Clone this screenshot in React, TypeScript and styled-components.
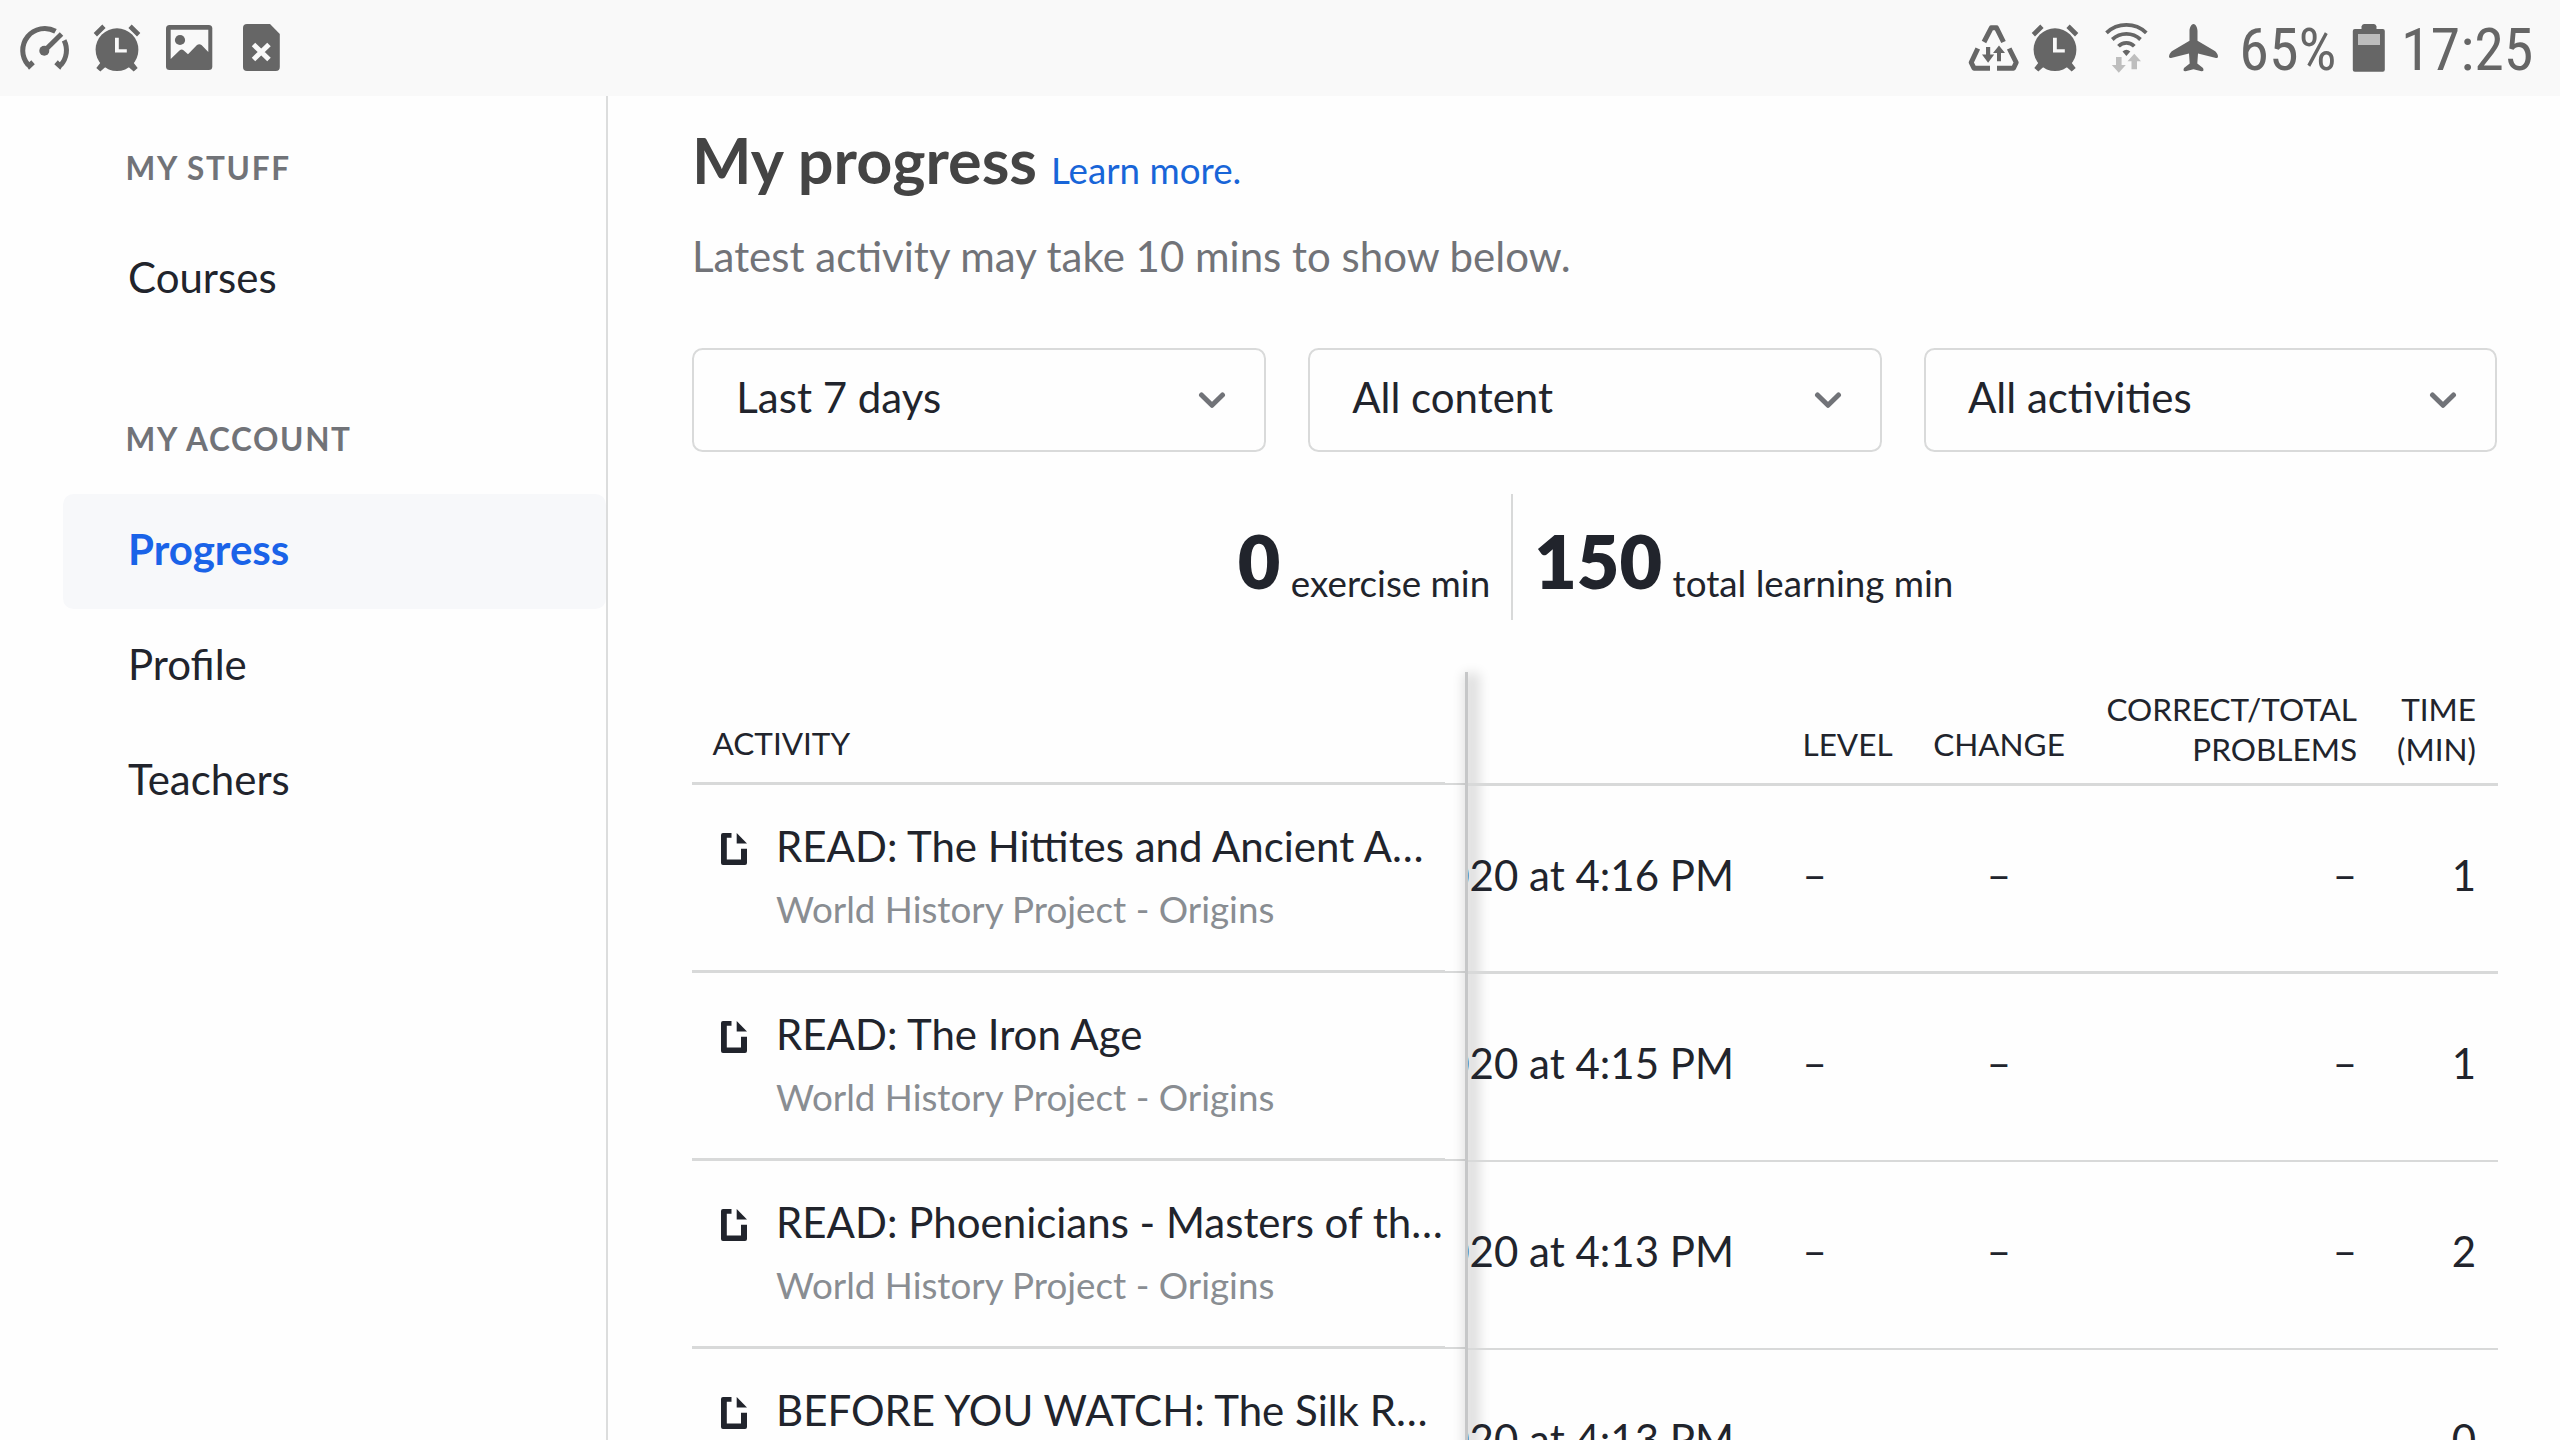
import React from "react";
import styled, { createGlobalStyle } from "styled-components";

const ink = "#21242c";
const line = "#d8d9d9";

const GlobalStyle = createGlobalStyle`
  * { box-sizing: border-box; }
  html, body { margin: 0; padding: 0; background: #fefefe; overflow: hidden; }
`;

const Screen = styled.div`
  width: 2560px;
  height: 1440px;
  display: flex;
  flex-direction: column;
  overflow: hidden;
  background: #fefefe;
  color: ${ink};
  font-family: Lato, "Liberation Sans", sans-serif;
  font-size: 42px;
`;

const StatusBar = styled.header`
  flex: none;
  height: 96px;
  display: flex;
  background: #f9f9f9;
  color: #666;
`;

const StatusGroup = styled.div<{ $end?: boolean }>`
  display: flex;
  margin-left: ${(p) => (p.$end ? "auto" : "0")};
`;

const StatusIcon = styled.svg<{ $before: number }>`
  flex: none;
  display: block;
  height: 96px;
  margin-left: ${(p) => p.$before}px;
`;

const StatusText = styled.div<{ $width: number; $before: number }>`
  flex: none;
  width: ${(p) => p.$width}px;
  margin-left: ${(p) => p.$before}px;
  padding-top: 15px;
  font-family: "Roboto Condensed", Roboto, "Liberation Sans", sans-serif;
  font-stretch: 75%;
  font-size: 60px;
  line-height: 70px;
  white-space: nowrap;
`;

const Body = styled.div`
  flex: 1;
  min-height: 0;
  display: flex;
`;

const Sidebar = styled.nav`
  flex: none;
  width: 608px;
  padding-left: 63px;
  border-right: 2px solid #dcdddd;
`;

const SideHeading = styled.h2<{ $height: number; $bottom: number }>`
  margin: 0;
  height: ${(p) => p.$height}px;
  display: flex;
  align-items: flex-end;
  padding: 0 0 ${(p) => p.$bottom}px 62.5px;
  font-size: 31.5px;
  line-height: 38px;
  font-weight: 700;
  letter-spacing: 1.68px;
  color: #717378;
`;

const SideItem = styled.a<{ $active?: boolean }>`
  height: 115px;
  display: flex;
  align-items: center;
  padding: 0 0 5px 65px;
  border-radius: 10.5px;
  background: ${(p) => (p.$active ? "#f7f8fa" : "transparent")};
  color: ${(p) => (p.$active ? "#1a63e8" : ink)};
  font-weight: ${(p) => (p.$active ? 700 : 400)};
`;

const Main = styled.main`
  flex: none;
  width: 1889.5px;
  padding: 25px 0 0 84px;
  display: flex;
  flex-direction: column;
`;

const TitleRow = styled.div`
  display: flex;
  align-items: baseline;
  gap: 14px;
`;

const Title = styled.h1`
  margin: 0;
  font-size: 63px;
  line-height: 77px;
  font-weight: 700;
  color: #444;
`;

const Learn = styled.a`
  font-size: 36.75px;
  color: #1865d8;
`;

const Note = styled.p`
  margin: 32px 0 0;
  line-height: 52px;
  color: #717378;
`;

const Filters = styled.div`
  margin-top: 66px;
  display: grid;
  grid-template-columns: repeat(3, 1fr);
  gap: 42px;
`;

const Select = styled.div`
  height: 104px;
  display: flex;
  align-items: center;
  justify-content: space-between;
  padding: 0 38px 0 42.3px;
  border: 2px solid #d9dada;
  border-radius: 10.5px;
  background: #fefefe;
`;

const SelectLabel = styled.span`
  padding-bottom: 6px;
`;

const Stats = styled.div`
  margin-top: 42px;
  height: 126px;
  display: flex;
  justify-content: center;
  padding-left: 1.5px;
`;

const Stat = styled.div<{ $first?: boolean }>`
  display: flex;
  align-items: flex-end;
  gap: 10.5px;
  padding: ${(p) => (p.$first ? "0 21px 14px 0" : "0 0 14px 21px")};
  border-right: ${(p) => (p.$first ? "2px solid #d8d9d9" : "0")};
`;

const StatNumber = styled.span`
  font-size: 73.5px;
  line-height: 90px;
  font-weight: 800;
`;

const StatUnit = styled.span`
  font-size: 36.75px;
  line-height: 45px;
`;

const Table = styled.div`
  margin: 52px -0.5px 0 0;
  height: 768px;
  display: flex;
`;

const Pinned = styled.div`
  flex: none;
  width: 773px;
`;

const Rail = styled.div`
  flex: none;
  width: 3px;
  height: 800px;
  background: #c6c7c8;
  box-shadow: 5px 8px 12px 7px rgba(0, 0, 0, 0.12);
`;

const Scroller = styled.div`
  flex: 1;
  min-width: 0;
  z-index: 1;
`;

const PinnedRow = styled.div<{ $height: number }>`
  height: ${(p) => p.$height}px;
  display: flex;
`;

const PinnedCell = styled.div`
  width: 753px;
  display: flex;
  border-bottom: 3px solid ${line};
`;

const PinnedEdge = styled.div`
  width: 20px;
  border-bottom: 2px solid ${line};
`;

const PinnedHead = styled.div`
  align-self: flex-end;
  padding: 0 0 19px 20.5px;
  font-size: 31.5px;
  line-height: 40px;
`;

const DocIcon = styled.svg`
  flex: none;
  width: 26px;
  height: 32px;
  margin: 48px 0 0 29px;
`;

const Activity = styled.div`
  padding: 35px 0 0 29px;
  white-space: nowrap;
`;

const ActivityTitle = styled.div`
  line-height: 52px;
`;

const ActivityCourse = styled.div`
  margin-top: 15px;
  font-size: 36.75px;
  line-height: 45px;
  color: #898d92;
`;

const DataRow = styled.div<{ $head?: boolean; $height: number; $rule: number }>`
  height: ${(p) => p.$height}px;
  display: grid;
  grid-template-columns: 334.5px 130.5px 132px 292px 119px;
  align-items: ${(p) => (p.$head ? "end" : "center")};
  padding-bottom: ${(p) => (p.$head ? 0 : 10 - p.$rule)}px;
  border-bottom: ${(p) => p.$rule}px solid ${line};
  font-size: ${(p) => (p.$head ? 31.5 : 42)}px;
  line-height: ${(p) => (p.$head ? "40px" : "52px")};
`;

const DateCell = styled.div`
  width: 266px;
  display: flex;
  justify-content: flex-end;
  overflow: hidden;
  white-space: nowrap;
`;

const Cell = styled.div<{ $align?: string; $bottom?: number }>`
  text-align: ${(p) => p.$align ?? "left"};
  padding-bottom: ${(p) => p.$bottom ?? 0}px;
`;

const Gauge = () => (
  <StatusIcon $before={19} width="52" viewBox="19 0 52 96" fill="none">
    <path d="M28.2 65A22 22 0 0 1 55.5 31.3" stroke="currentColor" strokeWidth="5" />
    <path d="M64.1 40.4A22 22 0 0 1 60.8 65" stroke="currentColor" strokeWidth="5" />
    <path d="M25.5 64.5L29 69.8 34.8 64.3 31.3 60.3 29.5 62zM63.5 64.5L60.3 69.8 54.3 64.3 57.8 60.3 59.5 62z" fill="currentColor" />
    <path d="M44.5 50.7L61.5 34" stroke="currentColor" strokeWidth="5" />
    <circle cx="44.3" cy="50.7" r="5" fill="currentColor" />
  </StatusIcon>
);

const Alarm = ({ before }: { before: number }) => (
  <StatusIcon $before={before} width="48" viewBox="93 0 48 96" fill="currentColor">
    <circle cx="117" cy="49.7" r="21.4" />
    <path d="M93.7 33L102.3 24.6 105.6 28 97 36.4zM140.3 33L131.7 24.6 128.4 28 137 36.4z" />
    <path d="M96.3 68L101 62 106 66.5 100.3 71.5zM137.7 68L133 62 128 66.5 133.7 71.5z" />
    <path d="M115 37.7h3.8v11.6h8v3.2H115z" fill="#f9f9f9" />
  </StatusIcon>
);

const Picture = () => (
  <StatusIcon $before={25} width="47" viewBox="166 0 47 96" fill="currentColor">
    <rect x="166" y="25" width="46.3" height="45" rx="3.5" />
    <path
      d="M170.7 29.7H208.3V52L201.5 45Q199.3 43.3 197 45L188 54.3 183.5 50.3Q181.7 48.8 179.5 50.5L170.7 59z"
      fill="#f9f9f9"
    />
    <circle cx="180" cy="40" r="5.1" />
  </StatusIcon>
);

const FileX = () => (
  <StatusIcon $before={30} width="37" viewBox="243 0 37 96" fill="currentColor">
    <path d="M247 24H270L279.8 34V67A4 4 0 0 1 275.8 71H247A4 4 0 0 1 243 67V28A4 4 0 0 1 247 24z" />
    <path d="M253.5 44.5L269 59.5M269 44.5L253.5 59.5" stroke="#f9f9f9" strokeWidth="5" />
  </StatusIcon>
);

const DataSaver = () => (
  <StatusIcon $before={0} width="53" viewBox="1967 0 53 96">
    <g fill="none" stroke="currentColor" strokeWidth="5" strokeLinejoin="round">
      <path d="M1984 42L1991.3 27.8H1996.5L2003.5 42" />
      <path d="M1977.8 48.5L1971.2 62.5 1974 68.2H1990" />
      <path d="M2009.2 48.5L2016.2 62.5 2013.5 68.2H1997" />
    </g>
    <path
      d="M1986 47h4.2v7.5h4L1988.1 62.7 1982 54.5h4zM1999 45.5L2005 53h-4v8.3h-4V53h-4z"
      fill="currentColor"
    />
  </StatusIcon>
);

const Wifi = () => (
  <StatusIcon $before={26.5} width="43" viewBox="2105 0 43 96">
    <g fill="none" stroke="currentColor" strokeWidth="3.8">
      <path d="M2106.5 32.8A29 29 0 0 1 2146.3 32.8" />
      <path d="M2112.3 39.5A20.5 20.5 0 0 1 2140.5 39.5" />
      <path d="M2118.5 46.3A11 11 0 0 1 2134.3 46.3" />
    </g>
    <path d="M2122.5 51.6Q2126.4 48 2130.3 51.6L2126.4 56z" fill="currentColor" />
    <path
      d="M2116 57h5.6v8h4.2L2118.8 72.7 2111.8 65h4.2zM2134.3 53.7L2141 61.3h-4V69.3h-5.5V61.3h-4z"
      fill="#bebebe"
    />
  </StatusIcon>
);

const Plane = () => (
  <StatusIcon $before={20} width="51" viewBox="2168 0 51 96" fill="currentColor">
    <path d="M2193.5 24C2196 24 2197.5 28 2197.5 31V40.7L2214 50.5Q2218 53 2218 57 2217.5 58.5 2215 57.7L2198 53.5 2197.3 63.5 2203 68Q2204.5 71.5 2201.5 71.3L2193.5 69.3 2185.5 71.3Q2182.5 71.5 2184 68L2189.7 63.5 2189 53.5 2172 57.7Q2169.5 58.5 2169 57 2169 53 2173 50.5L2189.5 40.7V31C2189.5 28 2191 24 2193.5 24z" />
  </StatusIcon>
);

const Battery = () => (
  <StatusIcon $before={0} width="34" viewBox="2352 0 34 96" fill="currentColor">
    <path d="M2361.5 29.5V26.5Q2362 24 2364 24H2374Q2376 24 2376.5 26.5V29.5z" />
    <rect x="2352.8" y="29" width="32" height="42.7" rx="2" />
    <rect x="2358" y="34" width="22" height="11" fill="#bdbdbd" />
  </StatusIcon>
);

const Chevron = () => (
  <svg width="28" height="18" viewBox="0 0 28 18" fill="none">
    <path d="M3.5 4L14 14.3 24.5 4" stroke="#717378" strokeWidth="5" strokeLinecap="round" strokeLinejoin="round" />
  </svg>
);

const Doc = () => (
  <DocIcon viewBox="0 0 26 32" fill={ink}>
    <path d="M2 0H10.5V4.8H5.8V26.5H20V15.7H26V30A2 2 0 0 1 24 32H2A2 2 0 0 1 0 30V2A2 2 0 0 1 2 0z" />
    <path d="M15.7 0L26 10.5H15.7z" />
  </DocIcon>
);

const activities = [
  { title: "READ: The Hittites and Ancient A…", date: "2020 at 4:16 PM", minutes: 1, rule: 3 },
  { title: "READ: The Iron Age", date: "2020 at 4:15 PM", minutes: 1, rule: 2 },
  { title: "READ: Phoenicians - Masters of th…", date: "2020 at 4:13 PM", minutes: 2, rule: 2 },
  { title: "BEFORE YOU WATCH: The Silk R…", date: "2020 at 4:13 PM", minutes: 0, rule: 2 },
];

export default function App() {
  return (
    <Screen>
      <GlobalStyle />
      <StatusBar>
        <StatusGroup>
          <Gauge />
          <Alarm before={22} />
          <Picture />
          <FileX />
        </StatusGroup>
        <StatusGroup $end>
          <DataSaver />
          <Alarm before={10.5} />
          <Wifi />
          <Plane />
          <StatusText $before={20.3} $width={112.7}>65%</StatusText>
          <Battery />
          <StatusText $before={15} $width={159}>17:25</StatusText>
        </StatusGroup>
      </StatusBar>
      <Body>
        <Sidebar>
          <SideHeading $height={126} $bottom={35}>MY STUFF</SideHeading>
          <SideItem>Courses</SideItem>
          <SideHeading $height={157} $bottom={36}>MY ACCOUNT</SideHeading>
          <SideItem $active>Progress</SideItem>
          <SideItem>Profile</SideItem>
          <SideItem>Teachers</SideItem>
        </Sidebar>
        <Main>
          <TitleRow>
            <Title>My progress</Title>
            <Learn>Learn more.</Learn>
          </TitleRow>
          <Note>Latest activity may take 10 mins to show below.</Note>
          <Filters>
            {["Last 7 days", "All content", "All activities"].map((label) => (
              <Select key={label}>
                <SelectLabel>{label}</SelectLabel>
                <Chevron />
              </Select>
            ))}
          </Filters>
          <Stats>
            <Stat $first>
              <StatNumber>0</StatNumber>
              <StatUnit>exercise min</StatUnit>
            </Stat>
            <Stat>
              <StatNumber>150</StatNumber>
              <StatUnit>total learning min</StatUnit>
            </Stat>
          </Stats>
          <Table>
            <Pinned>
              <PinnedRow $height={113}>
                <PinnedCell>
                  <PinnedHead>ACTIVITY</PinnedHead>
                </PinnedCell>
                <PinnedEdge />
              </PinnedRow>
              {activities.map((a) => (
                <PinnedRow key={a.title} $height={188}>
                  <PinnedCell>
                    <Doc />
                    <Activity>
                      <ActivityTitle>{a.title}</ActivityTitle>
                      <ActivityCourse>World History Project - Origins</ActivityCourse>
                    </Activity>
                  </PinnedCell>
                  <PinnedEdge />
                </PinnedRow>
              ))}
            </Pinned>
            <Rail />
            <Scroller>
              <DataRow $head $height={114} $rule={3}>
                <DateCell />
                <Cell $bottom={19}>LEVEL</Cell>
                <Cell $bottom={19} $align="center">CHANGE</Cell>
                <Cell $bottom={14} $align="right">CORRECT/TOTAL<br />PROBLEMS</Cell>
                <Cell $bottom={14} $align="right">TIME<br />(MIN)</Cell>
              </DataRow>
              {activities.map((a) => (
                <DataRow key={a.title} $height={188} $rule={a.rule}>
                  <DateCell>{a.date}</DateCell>
                  <Cell $bottom={2}>–</Cell>
                  <Cell $bottom={2} $align="center">–</Cell>
                  <Cell $bottom={2} $align="right">–</Cell>
                  <Cell $align="right">{a.minutes}</Cell>
                </DataRow>
              ))}
            </Scroller>
          </Table>
        </Main>
      </Body>
    </Screen>
  );
}
